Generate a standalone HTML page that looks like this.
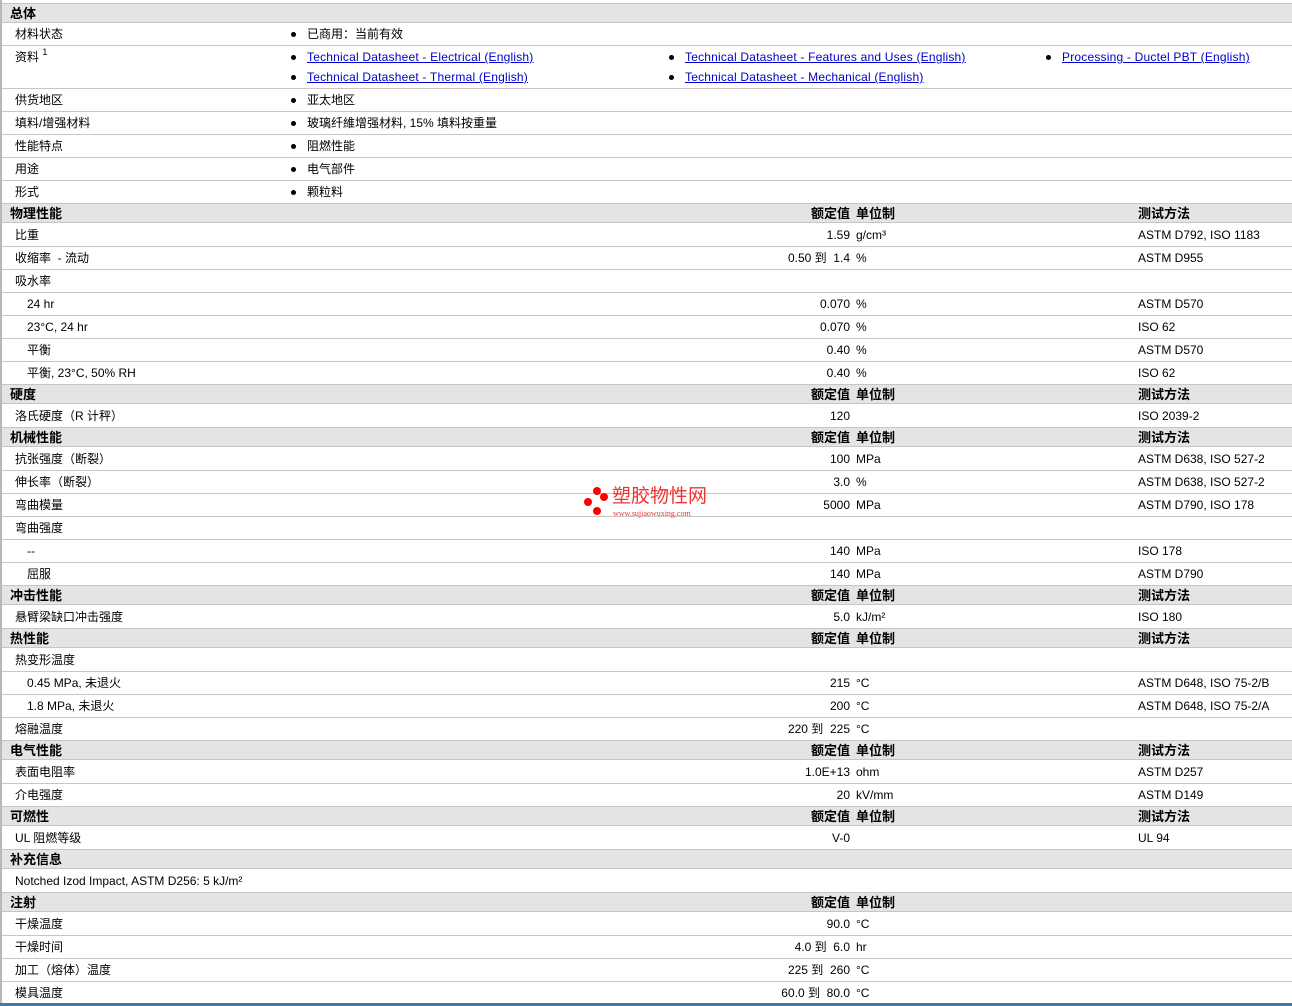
<!DOCTYPE html>
<html><head><meta charset="utf-8"><style>
body{margin:0;width:1292px;height:1006px;background:#fff;position:relative;overflow:hidden;font-family:"Liberation Sans","Noto Sans CJK SC",sans-serif;font-size:12px;color:#000}
.lb{position:absolute;left:0;top:0;width:2px;height:1003px;background:#b8b8b8}
.r{position:absolute;left:2px;right:0;height:23px;line-height:22px;border-bottom:1px solid #c6c6c6;box-sizing:border-box}
.h{height:20px;line-height:19px;background:#e4e4e4;font-weight:bold;border-top:1px solid #c6c6c6;font-size:13px}
.r span{position:absolute;white-space:nowrap}
.l{left:13px}.h .l{left:8px}.i{left:25px}
.v{right:442px;text-align:right}
.u{left:854px}.m{left:1136px}
.b{left:289px}.b:before,.c:before,.d:before{content:"";position:absolute;left:0;top:9px;width:5px;height:5px;border-radius:50%;background:#000}
.b b,.c b,.d b{font-weight:normal;margin-left:16px}
.c{left:667px}.d{left:1044px}
a{color:#00c;text-decoration:underline;letter-spacing:0.2px}
.blue{position:absolute;left:0;right:0;top:1003px;height:3px;background:#3f7ab0}
</style></head><body>
<div class="lb"></div>
<div class="r h" style="top:3px"><span class="l">总体</span></div>
<div class="r" style="top:23px"><span class="l">材料状态</span><span class="b"><b>已商用：当前有效</b></span></div>
<div class="r" style="top:46px;height:43px"><span class="l">资料 <sup style="font-size:9px;vertical-align:6px;line-height:0">1</sup></span>
<span class="b" style="top:0"><b><a>Technical Datasheet - Electrical (English)</a></b></span>
<span class="b" style="top:20px"><b><a>Technical Datasheet - Thermal (English)</a></b></span>
<span class="c" style="top:0"><b><a>Technical Datasheet - Features and Uses (English)</a></b></span>
<span class="c" style="top:20px"><b><a>Technical Datasheet - Mechanical (English)</a></b></span>
<span class="d" style="top:0"><b><a>Processing - Ductel PBT (English)</a></b></span></div>
<div class="r" style="top:89px"><span class="l">供货地区</span><span class="b"><b>亚太地区</b></span></div>
<div class="r" style="top:112px"><span class="l">填料/增强材料</span><span class="b"><b>玻璃纤維增强材料, 15% 填料按重量</b></span></div>
<div class="r" style="top:135px"><span class="l">性能特点</span><span class="b"><b>阻燃性能</b></span></div>
<div class="r" style="top:158px"><span class="l">用途</span><span class="b"><b>电气部件</b></span></div>
<div class="r" style="top:181px"><span class="l">形式</span><span class="b"><b>颗粒料</b></span></div>
<div class="r h" style="top:203px"><span class="l">物理性能</span><span class="v">额定值</span><span class="u">单位制</span><span class="m">测试方法</span></div>
<div class="r" style="top:224px"><span class="l">比重</span><span class="v">1.59</span><span class="u">g/cm³</span><span class="m">ASTM D792, ISO 1183</span></div>
<div class="r" style="top:247px"><span class="l">收缩率 &nbsp;- 流动</span><span class="v">0.50 到&nbsp; 1.4</span><span class="u">%</span><span class="m">ASTM D955</span></div>
<div class="r" style="top:270px"><span class="l">吸水率</span></div>
<div class="r" style="top:293px"><span class="i">24 hr</span><span class="v">0.070</span><span class="u">%</span><span class="m">ASTM D570</span></div>
<div class="r" style="top:316px"><span class="i">23°C, 24 hr</span><span class="v">0.070</span><span class="u">%</span><span class="m">ISO 62</span></div>
<div class="r" style="top:339px"><span class="i">平衡</span><span class="v">0.40</span><span class="u">%</span><span class="m">ASTM D570</span></div>
<div class="r" style="top:362px"><span class="i">平衡, 23°C, 50% RH</span><span class="v">0.40</span><span class="u">%</span><span class="m">ISO 62</span></div>
<div class="r h" style="top:384px"><span class="l">硬度</span><span class="v">额定值</span><span class="u">单位制</span><span class="m">测试方法</span></div>
<div class="r" style="top:405px"><span class="l">洛氏硬度（R 计秤）</span><span class="v">120</span><span class="m">ISO 2039-2</span></div>
<div class="r h" style="top:427px"><span class="l">机械性能</span><span class="v">额定值</span><span class="u">单位制</span><span class="m">测试方法</span></div>
<div class="r" style="top:448px"><span class="l">抗张强度（断裂）</span><span class="v">100</span><span class="u">MPa</span><span class="m">ASTM D638, ISO 527-2</span></div>
<div class="r" style="top:471px"><span class="l">伸长率（断裂）</span><span class="v">3.0</span><span class="u">%</span><span class="m">ASTM D638, ISO 527-2</span></div>
<div class="r" style="top:494px"><span class="l">弯曲模量</span><span class="v">5000</span><span class="u">MPa</span><span class="m">ASTM D790, ISO 178</span></div>
<div class="r" style="top:517px"><span class="l">弯曲强度</span></div>
<div class="r" style="top:540px"><span class="i">--</span><span class="v">140</span><span class="u">MPa</span><span class="m">ISO 178</span></div>
<div class="r" style="top:563px"><span class="i">屈服</span><span class="v">140</span><span class="u">MPa</span><span class="m">ASTM D790</span></div>
<div class="r h" style="top:585px"><span class="l">冲击性能</span><span class="v">额定值</span><span class="u">单位制</span><span class="m">测试方法</span></div>
<div class="r" style="top:606px"><span class="l">悬臂梁缺口冲击强度</span><span class="v">5.0</span><span class="u">kJ/m²</span><span class="m">ISO 180</span></div>
<div class="r h" style="top:628px"><span class="l">热性能</span><span class="v">额定值</span><span class="u">单位制</span><span class="m">测试方法</span></div>
<div class="r" style="top:649px"><span class="l">热变形温度</span></div>
<div class="r" style="top:672px"><span class="i">0.45 MPa, 未退火</span><span class="v">215</span><span class="u">°C</span><span class="m">ASTM D648, ISO 75-2/B</span></div>
<div class="r" style="top:695px"><span class="i">1.8 MPa, 未退火</span><span class="v">200</span><span class="u">°C</span><span class="m">ASTM D648, ISO 75-2/A</span></div>
<div class="r" style="top:718px"><span class="l">熔融温度</span><span class="v">220 到&nbsp; 225</span><span class="u">°C</span></div>
<div class="r h" style="top:740px"><span class="l">电气性能</span><span class="v">额定值</span><span class="u">单位制</span><span class="m">测试方法</span></div>
<div class="r" style="top:761px"><span class="l">表面电阻率</span><span class="v">1.0E+13</span><span class="u">ohm</span><span class="m">ASTM D257</span></div>
<div class="r" style="top:784px"><span class="l">介电强度</span><span class="v">20</span><span class="u">kV/mm</span><span class="m">ASTM D149</span></div>
<div class="r h" style="top:806px"><span class="l">可燃性</span><span class="v">额定值</span><span class="u">单位制</span><span class="m">测试方法</span></div>
<div class="r" style="top:827px"><span class="l">UL 阻燃等级</span><span class="v">V-0</span><span class="m">UL 94</span></div>
<div class="r h" style="top:849px"><span class="l">补充信息</span></div>
<div class="r" style="top:870px"><span class="l">Notched Izod Impact, ASTM D256: 5 kJ/m²</span></div>
<div class="r h" style="top:892px"><span class="l">注射</span><span class="v">额定值</span><span class="u">单位制</span></div>
<div class="r" style="top:913px"><span class="l">干燥温度</span><span class="v">90.0</span><span class="u">°C</span></div>
<div class="r" style="top:936px"><span class="l">干燥时间</span><span class="v">4.0 到&nbsp; 6.0</span><span class="u">hr</span></div>
<div class="r" style="top:959px"><span class="l">加工（熔体）温度</span><span class="v">225 到&nbsp; 260</span><span class="u">°C</span></div>
<div class="r" style="top:982px;height:21px;border-bottom:none"><span class="l">模具温度</span><span class="v">60.0 到&nbsp; 80.0</span><span class="u">°C</span></div>
<div class="blue"></div>
<div style="position:absolute;left:583px;top:486px;width:130px;height:34px">
<div style="position:absolute;left:10px;top:1px;width:8px;height:8px;border-radius:50%;background:#f00"></div>
<div style="position:absolute;left:17px;top:7px;width:8px;height:8px;border-radius:50%;background:#f00"></div>
<div style="position:absolute;left:1px;top:12px;width:8px;height:8px;border-radius:50%;background:#f00"></div>
<div style="position:absolute;left:10px;top:21px;width:8px;height:8px;border-radius:50%;background:#f00"></div>
<div style="position:absolute;left:29px;top:1px;font-size:19px;line-height:20px;color:#e33">塑胶物性网</div>
<div style="position:absolute;left:30px;top:23px;font-size:8px;line-height:9px;color:#e33;font-family:'Liberation Serif',serif">www.sujiaowuxing.com</div>
</div>
</body></html>
